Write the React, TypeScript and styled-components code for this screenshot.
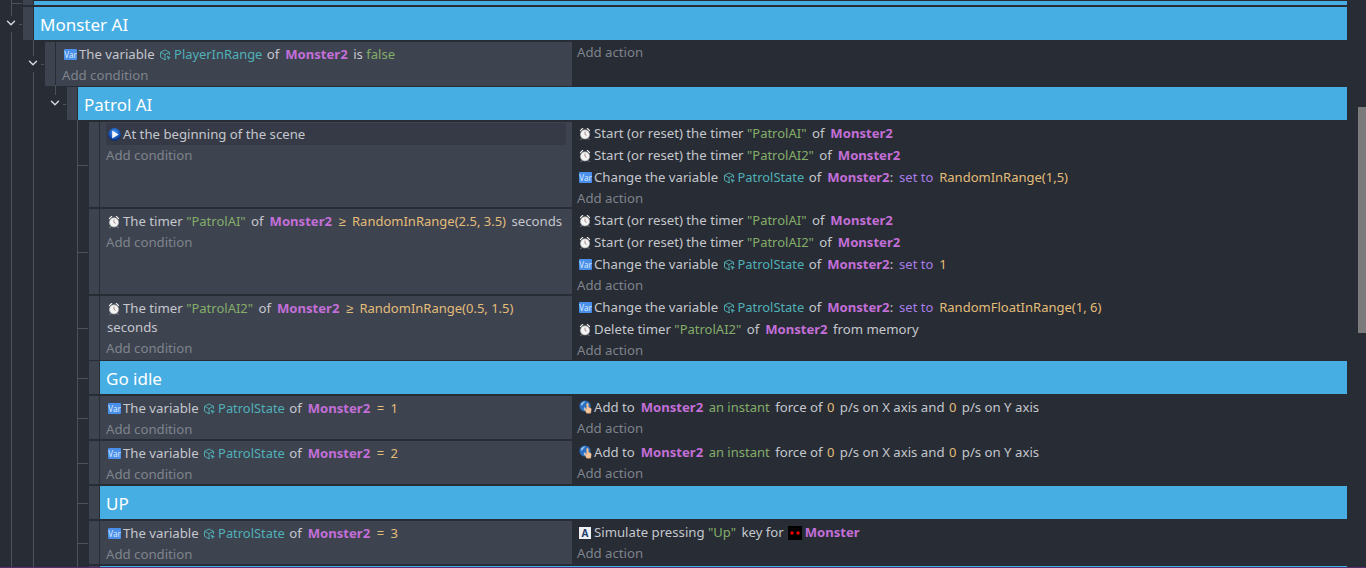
import React from "react";
import styled, { createGlobalStyle } from "styled-components";
import { ChevronDown } from "lucide-react";

const GlobalStyle = createGlobalStyle`
  html, body {
    margin: 0;
    padding: 0;
    background: #282c34;
    overflow: hidden;
  }
  * {
    box-sizing: border-box;
  }
`;

const VarIcon = () => <VarBadge>Var</VarBadge>;

const CubeIcon = () => (
  <InlineSvg width="12" height="12" viewBox="0 0 12 12" fill="none" stroke="#4fa9ae" strokeWidth="1">
    <path d="M6 1 10.5 3.3V6M6 1 1.5 3.3v5L6 10.8 7 10.3M1.5 3.3 6 5.6 10.5 3.3M6 5.6v5" />
    <path d="M8 7l3.5 1.5-1.5.6-.6 1.5z" fill="#4fa9ae" strokeWidth="0.6" />
  </InlineSvg>
);

const TimerIcon = () => (
  <IconSlot>
    <svg width="12" height="13" viewBox="0 0 13 14">
      <path d="M1 3.6 3.2 1.2c.9-.6 1.8 0 1.6.5L1.8 4.6C1.2 4.8.8 4.2 1 3.6zM12 3.6 9.8 1.2c-.9-.6-1.8 0-1.6.5l3 2.9c.6.2 1-.4.8-1z" fill="#ececec" />
      <circle cx="6.5" cy="8" r="5" fill="#f4f4f4" stroke="#a9a9a9" strokeWidth="0.7" />
      <path d="M6.5 5v3l1.8 1" fill="none" stroke="#9a7777" strokeWidth="0.9" />
      <path d="M3 12.5 2 13.6M10 12.5l1 1.1" stroke="#d8d8d8" strokeWidth="1" />
    </svg>
  </IconSlot>
);

const SceneIcon = () => (
  <IconSlot>
    <svg width="13" height="13" viewBox="0 0 13 13">
      <defs>
        <radialGradient id="sceneBall" cx="50%" cy="35%" r="65%">
          <stop offset="0%" stopColor="#4a9bf5" />
          <stop offset="65%" stopColor="#1554b8" />
          <stop offset="100%" stopColor="#0a2560" />
        </radialGradient>
      </defs>
      <circle cx="6.5" cy="6.5" r="6.4" fill="url(#sceneBall)" />
      <path d="M4.2 2.6 10.6 6.5 4.2 10.4z" fill="#f5f8ff" />
    </svg>
  </IconSlot>
);

const ForceIcon = () => (
  <IconSlot>
    <svg width="13" height="14" viewBox="0 0 13 14">
      <circle cx="6" cy="6" r="5.6" fill="#2a6fc0" />
      <path d="M2 3.4c1.4-.6 2.6-1.8 3.4-2.4.6 1 .2 2-1 2.6-.4 1.4-1.2 2.2-2.4 1.8zM5.4 7.2c1 .2 1.6 1 1.2 2.2-.4.8-1 1.4-1.6.8-.4-1-.4-2-0-3z" fill="#9cc3e6" />
      <path d="M8.4 3.2c.7 0 1 .4 1 1v3l2 .8c.8.4 1 1 .8 2l-.5 3.2H7.6L5.8 9.2c-.2-.7.5-1.1 1-.6l.8.8V4.2c0-.6.2-1 .8-1z" fill="#f6c79c" stroke="#e7a676" strokeWidth="0.4" />
    </svg>
  </IconSlot>
);

const KeyIcon = () => <KeyBadge>A</KeyBadge>;

const MonsterSprite = () => (
  <SpriteSlot>
    <svg width="14" height="14" viewBox="0 0 14 14">
      <rect width="14" height="14" fill="#000" />
      <circle cx="4" cy="7" r="1.7" fill="#f00000" />
      <circle cx="10" cy="7" r="1.7" fill="#f00000" />
    </svg>
  </SpriteSlot>
);

const Fold = () => (
  <Chevron>
    <ChevronDown size={14} strokeWidth={2.5} />
  </Chevron>
);

const Variable = ({ name }: { name: string }) => (
  <VarName>
    <CubeIcon />
    {name}
  </VarName>
);

const ActionStart = ({ timer }: { timer: string }) => (
  <Clause>
    <TimerIcon />
    Start (or reset) the timer <Str>"{timer}"</Str> of <Obj>Monster2</Obj>
  </Clause>
);

const ChangeState = ({ children }: { children: React.ReactNode }) => (
  <Clause>
    <VarIcon />
    Change the variable <Variable name="PatrolState" /> of <Obj $flush>Monster2</Obj>: <Op>set to</Op> <Expr>{children}</Expr>
  </Clause>
);

const StateIs = ({ value }: { value: number }) => (
  <Clause>
    <VarIcon />
    The variable <Variable name="PatrolState" /> of <Obj>Monster2</Obj> <Expr>=</Expr> <Expr>{value}</Expr>
  </Clause>
);

const AddForce = () => (
  <Clause>
    <ForceIcon />
    Add to <Obj>Monster2</Obj> <Str>an instant</Str> force of <Expr>0</Expr> p/s on X axis and <Expr>0</Expr> p/s on Y axis
  </Clause>
);

const IdleRow = ({ value }: { value: number }) => (
  <Row>
    <Handle />
    <Conditions>
      <StateIs value={value} />
      <AddLine>Add condition</AddLine>
    </Conditions>
    <Actions>
      <AddForce />
      <AddLine>Add action</AddLine>
    </Actions>
  </Row>
);

const App = () => {
  return (
    <Page>
      <GlobalStyle />
      <Main>
        <Sheet>
          <Tree>
            <Row $height={5}>
              <Handle />
              <Band $thin />
            </Row>
            <Row $height={33}>
              <Fold />
              <Handle />
              <Band>Monster AI</Band>
            </Row>
            <Children>
              <Row $height={44} $gap={1}>
                <Fold />
                <Handle />
                <Conditions>
                  <Clause>
                    <VarIcon />
                    The variable <Variable name="PlayerInRange" /> of <Obj>Monster2</Obj> is <Str>false</Str>
                  </Clause>
                  <AddLine>Add condition</AddLine>
                </Conditions>
                <Actions>
                  <AddLine>Add action</AddLine>
                </Actions>
              </Row>
              <Children $stub>
                <Row $height={33}>
                  <Fold />
                  <Handle />
                  <Band>Patrol AI</Band>
                </Row>
                <Children>
                  <Row $height={85}>
                    <Handle />
                    <Conditions>
                      <Clause $active>
                        <SceneIcon />
                        At the beginning of the scene
                      </Clause>
                      <AddLine>Add condition</AddLine>
                    </Conditions>
                    <Actions>
                      <ActionStart timer="PatrolAI" />
                      <ActionStart timer="PatrolAI2" />
                      <ChangeState>RandomInRange(1,5)</ChangeState>
                      <AddLine>Add action</AddLine>
                    </Actions>
                  </Row>
                  <Row $height={85}>
                    <Handle />
                    <Conditions>
                      <Clause>
                        <TimerIcon />
                        The timer <Str>"PatrolAI"</Str> of <Obj>Monster2</Obj> <Expr>≥</Expr> <Expr>RandomInRange(2.5, 3.5)</Expr> seconds
                      </Clause>
                      <AddLine>Add condition</AddLine>
                    </Conditions>
                    <Actions>
                      <ActionStart timer="PatrolAI" />
                      <ActionStart timer="PatrolAI2" />
                      <ChangeState>1</ChangeState>
                      <AddLine>Add action</AddLine>
                    </Actions>
                  </Row>
                  <Row $height={64} $gap={1}>
                    <Handle />
                    <Conditions>
                      <Clause>
                        <TimerIcon />
                        The timer <Str>"PatrolAI2"</Str> of <Obj>Monster2</Obj> <Expr>≥</Expr> <Expr>RandomInRange(0.5, 1.5)</Expr> seconds
                      </Clause>
                      <AddLine>Add condition</AddLine>
                    </Conditions>
                    <Actions>
                      <ChangeState>RandomFloatInRange(1, 6)</ChangeState>
                      <Clause>
                        <TimerIcon />
                        Delete timer <Str>"PatrolAI2"</Str> of <Obj>Monster2</Obj> from memory
                      </Clause>
                      <AddLine>Add action</AddLine>
                    </Actions>
                  </Row>
                  <Row $height={33}>
                    <Handle />
                    <Band>Go idle</Band>
                  </Row>
                  <IdleRow value={1} />
                  <IdleRow value={2} />
                  <Row $height={33}>
                    <Handle />
                    <Band>UP</Band>
                  </Row>
                  <Row>
                    <Handle />
                    <Conditions>
                      <StateIs value={3} />
                      <AddLine>Add condition</AddLine>
                    </Conditions>
                    <Actions>
                      <Clause>
                        <KeyIcon />
                        Simulate pressing <Str>"Up"</Str> key for <MonsterSprite />
                        <Obj>Monster</Obj>
                      </Clause>
                      <AddLine>Add action</AddLine>
                    </Actions>
                  </Row>
                  <Row $height={33}>
                    <Handle />
                    <Band />
                  </Row>
                </Children>
              </Children>
            </Children>
          </Tree>
        </Sheet>
        <Track>
          <Thumb />
        </Track>
      </Main>
      <StatusLine />
    </Page>
  );
};

const Page = styled.div`
  display: flex;
  flex-direction: column;
  height: 100vh;
  overflow: hidden;
  background: #282c34;
  color: #c4c7cd;
  font-family: "Noto Sans", "Liberation Sans", sans-serif;
  font-size: 13.2px;
`;

const Main = styled.div`
  flex: 1;
  display: flex;
  min-height: 0;
  overflow: hidden;
`;

const Sheet = styled.div`
  flex: 1;
  padding: 0 11px 0 23px;
  overflow: hidden;
`;

const Tree = styled.div`
  position: relative;

  &::before {
    content: "";
    position: absolute;
    left: -12px;
    top: 0;
    bottom: 0;
    width: 1px;
    background: #4d5159;
  }
`;

const Children = styled.div<{ $stub?: boolean }>`
  position: relative;
  margin-left: 22px;

  &::before {
    content: "";
    position: absolute;
    left: -12px;
    top: -2px;
    width: 1px;
    background: #4d5159;
    ${(p) => (p.$stub ? "height: 10px;" : "bottom: 0;")}
  }
`;

const Row = styled.div<{ $height?: number; $gap?: number }>`
  position: relative;
  display: flex;
  height: ${(p) => p.$height ?? 43}px;
  margin-bottom: ${(p) => p.$gap ?? 2}px;

  &::before {
    content: "";
    position: absolute;
    left: -11px;
    top: 50%;
    width: 10px;
    height: 1px;
    background: #4d5159;
  }
`;

const Chevron = styled.span`
  position: absolute;
  z-index: 1;
  left: -20px;
  top: calc(50% - 8px);
  width: 16px;
  height: 16px;
  padding-bottom: 2px;
  display: flex;
  align-items: center;
  justify-content: center;
  background: #282c34;
  color: #d4d6da;
`;

const Handle = styled.div`
  flex: none;
  width: 10px;
  margin-right: 1px;
  background: #3e4350;
`;

const Band = styled.div<{ $thin?: boolean }>`
  flex: 1;
  padding-left: 6px;
  margin-top: ${(p) => (p.$thin ? 1 : 0)}px;
  background: #47aee3;
  color: #fff;
  font-size: 17px;
  line-height: 35px;
`;

const Conditions = styled.div`
  flex: 1;
  min-width: 0;
  padding: 0.5px 6px 0;
  background: #3e4350;
`;

const Actions = styled.div`
  flex: none;
  width: 775px;
  padding-left: 5px;
`;

const Clause = styled.div<{ $active?: boolean }>`
  min-height: 22px;
  padding: 2px 0 1px 1px;
  line-height: 19px;
  background: ${(p) => (p.$active ? "#363a46" : "transparent")};
`;

const AddLine = styled.div`
  color: #7f838c;
  line-height: 21px;
`;

const IconSlot = styled.span`
  display: inline-block;
  width: 16px;
  height: 14px;
  padding-left: 1px;
  line-height: 0;
  vertical-align: -2px;
`;

const VarBadge = styled.span`
  display: inline-block;
  width: 13px;
  height: 11px;
  margin: 4px 2px 0 1px;
  border-radius: 1px;
  background: #4a90ea;
  color: #d9e9fc;
  font-size: 8px;
  line-height: 11px;
  text-align: center;
  vertical-align: top;
`;

const KeyBadge = styled.span`
  display: inline-block;
  width: 12px;
  height: 12px;
  margin: 4px 3px 0 1px;
  background: #eef0f4;
  color: #1f3f6e;
  font-size: 10px;
  font-weight: 700;
  line-height: 12px;
  text-align: center;
  vertical-align: top;
`;

const InlineSvg = styled.svg`
  margin-right: 3px;
  vertical-align: -2px;
`;

const SpriteSlot = styled.span`
  display: inline-block;
  margin-left: 1px;
  line-height: 0;
  vertical-align: -3px;
`;

const VarName = styled.span`
  margin: 0 1px;
  color: #4fb0b8;
  font-size: 12.9px;
`;

const Obj = styled.b<{ $flush?: boolean }>`
  margin: 0 ${(p) => (p.$flush ? 0 : 2)}px 0 2.5px;
  color: #c36fd8;
  font-size: 13.1px;
  font-weight: 700;
`;

const Str = styled.span`
  margin: 0 2px 0 0;
  color: #84ad6a;
  font-size: 13px;
`;

const Expr = styled.span`
  margin: 0 2px 0 1px;
  color: #e3bd7a;
  font-size: 13px;
`;

const Op = styled.span`
  margin: 0 1.5px 0 2.5px;
  color: #a77de8;
  font-size: 13px;
`;

const Track = styled.div`
  flex: none;
  width: 8px;
  padding-top: 107px;
  background: #282c34;
`;

const Thumb = styled.div`
  height: 226px;
  background: #7b7b7b;
`;

const StatusLine = styled.div`
  flex: none;
  height: 1px;
  background: #5a2d70;
`;

export default App;
